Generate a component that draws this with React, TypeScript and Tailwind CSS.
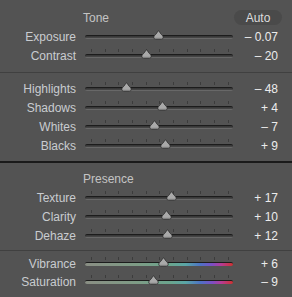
import React from "react";

type Row = { label: string; value: string; pos: number; ticks?: boolean; color?: boolean };

const tone: Row[] = [
  { label: "Exposure", value: "– 0.07", pos: 73, ticks: false },
  { label: "Contrast", value: "– 20", pos: 61 },
];

const tone2: Row[] = [
  { label: "Highlights", value: "– 48", pos: 41 },
  { label: "Shadows", value: "+ 4", pos: 77 },
  { label: "Whites", value: "– 7", pos: 69 },
  { label: "Blacks", value: "+ 9", pos: 80 },
];

const presence: Row[] = [
  { label: "Texture", value: "+ 17", pos: 86 },
  { label: "Clarity", value: "+ 10", pos: 81 },
  { label: "Dehaze", value: "+ 12", pos: 82 },
];

const color: Row[] = [
  { label: "Vibrance", value: "+ 6", pos: 78, color: true },
  { label: "Saturation", value: "– 9", pos: 68, color: true },
];

const tickXs = [6, 20, 33, 47, 61, 74, 88, 102, 115, 129, 143];

const Thumb = ({ x }: { x: number }) => (
  <svg
    width="11"
    height="10"
    viewBox="0 0 11 10"
    className="absolute top-[-5px]"
    style={{ left: x - 5.5 }}
  >
    <path
      d="M5.5 0.8 C6.2 0.8 6.6 2.2 7.6 3.6 C8.6 5 10.2 5.6 10.2 7.2 C10.2 8.6 9.2 9.2 8 9.2 L3 9.2 C1.8 9.2 0.8 8.6 0.8 7.2 C0.8 5.6 2.4 5 3.4 3.6 C4.4 2.2 4.8 0.8 5.5 0.8 Z"
      fill="#a9a9a9"
      stroke="#2c2c2c"
      strokeWidth="0.9"
    />
    <path d="M2 8.3 L9 8.3" stroke="#7e7e7e" strokeWidth="1" />
  </svg>
);

const Slider = ({ row }: { row: Row }) => (
  <div className="relative h-[4px] w-[148px]">
    {row.ticks !== false &&
      tickXs.map((t) => (
        <div key={t} className="absolute top-[-5px] h-[3px] w-px bg-[#3c3c3c]" style={{ left: t }} />
      ))}
    <div
      className={
        row.color
          ? "h-[4px] w-full rounded-full border-t border-[#1c1c1c] bg-[linear-gradient(to_right,#8a8e84_0%,#7e9c86_35%,#6aa58e_58%,#5aa6a6_68%,#4d72c4_78%,#7c4ec4_86%,#b43c96_92%,#d2302e_100%)]"
          : "h-[4px] w-full rounded-full border-t border-[#1c1c1c] bg-[linear-gradient(to_bottom,#333_0%,#444_50%,#7a7a7a_100%)]"
      }
    />
    <Thumb x={row.pos} />
  </div>
);

const SliderRow = ({ row }: { row: Row }) => (
  <div className="flex h-[19px] items-center">
    <div className="w-[77px] pr-[1px] text-right text-[#c9ccd0]">{row.label}</div>
    <div className="ml-[8px]">
      <Slider row={row} />
    </div>
    <div className="w-[45px] text-right text-[#ececec]">{row.value}</div>
  </div>
);

export default function App() {
  return (
    <div
      className="h-[297px] w-[292px] overflow-hidden bg-[#535353] text-[12px] leading-none"
      style={{ fontFamily: '"Liberation Sans", Arial, sans-serif' }}
    >
      <div className="pt-[8px] pb-[7px]">
        <div className="flex h-[19px] items-center">
          <div className="ml-[83px] text-[#c4c4c4]">Tone</div>
          <div className="ml-auto mr-[10px] flex h-[15px] w-[48px] items-center justify-center rounded-full bg-[#4a4a4a] text-[#dcdcdc]">
            Auto
          </div>
        </div>
        {tone.map((r) => (
          <SliderRow key={r.label} row={r} />
        ))}
      </div>
      <div className="h-px bg-[#404040]" />
      <div className="pt-[6px] pb-[6px]">
        {tone2.map((r) => (
          <SliderRow key={r.label} row={r} />
        ))}
      </div>
      <div className="h-[2px] bg-[#1a1a1a]" />
      <div className="pt-[6px] pb-[5px]">
        <div className="flex h-[19px] items-center">
          <div className="ml-[83px] text-[#c4c4c4]">Presence</div>
        </div>
        {presence.map((r) => (
          <SliderRow key={r.label} row={r} />
        ))}
      </div>
      <div className="h-px bg-[#404040]" />
      <div className="pt-[3px]">
        {color.map((r) => (
          <div key={r.label} className="h-[18px]">
            <SliderRow row={r} />
          </div>
        ))}
      </div>
    </div>
  );
}
